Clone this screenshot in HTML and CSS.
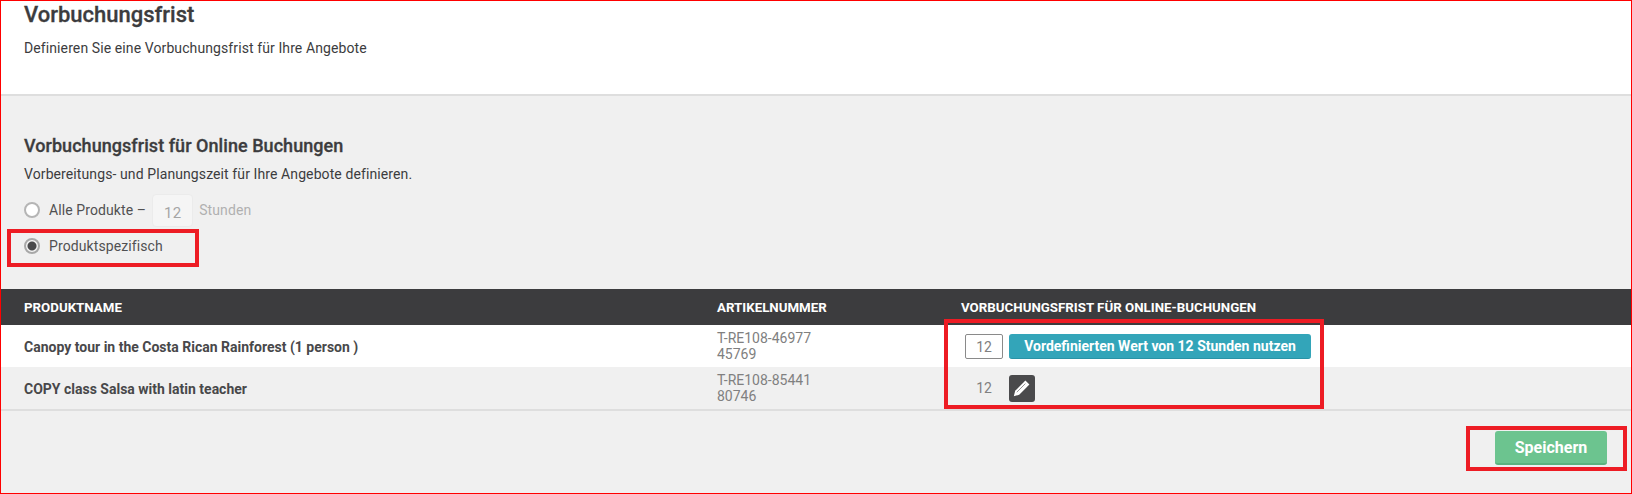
FILE: index.html
```html
<!DOCTYPE html>
<html lang="de">
<head>
    <meta charset="UTF-8">
    <title>Vorbuchungsfrist</title>
    <link rel="stylesheet" href="styles.css">
</head>
<body>
    <div class="page">
        <header class="page-head">
            <h1>Vorbuchungsfrist</h1>
            <p>Definieren Sie eine Vorbuchungsfrist für Ihre Angebote</p>
        </header>

        <section class="intro">
            <h2>Vorbuchungsfrist für Online Buchungen</h2>
            <p>Vorbereitungs- und Planungszeit für Ihre Angebote definieren.</p>
            <div class="option option-all">
                <span class="radio"></span>
                <span class="option-label">Alle Produkte –</span>
                <span class="hours-box">12</span>
                <span class="option-muted">Stunden</span>
            </div>
            <div class="option option-specific">
                <span class="radio radio-on"></span>
                <span class="option-label">Produktspezifisch</span>
            </div>
        </section>

        <div class="table">
            <div class="row row-head">
                <div>PRODUKTNAME</div>
                <div>ARTIKELNUMMER</div>
                <div>VORBUCHUNGSFRIST FÜR ONLINE-BUCHUNGEN</div>
            </div>
            <div class="row row-white">
                <div class="name">Canopy tour in the Costa Rican Rainforest (1 person )</div>
                <div class="number">T-RE108-46977<br>45769</div>
                <div class="lead">
                    <span class="lead-input">12</span>
                    <button class="btn-default">Vordefinierten Wert von 12 Stunden nutzen</button>
                </div>
            </div>
            <div class="row row-grey">
                <div class="name">COPY class Salsa with latin teacher</div>
                <div class="number">T-RE108-85441<br>80746</div>
                <div class="lead">
                    <span class="lead-value">12</span>
                    <button class="btn-edit" aria-label="Bearbeiten">
                        <svg width="18" height="18" viewBox="0 0 18 18">
                            <path d="M12.4 1.6l4 4-10.2 10.2-5.4 1.4 1.4-5.4z" fill="#fff"/>
                            <path d="M3.8 13.2l8.6-8.6" stroke="#77777a" stroke-width="0.8" fill="none"/>
                        </svg>
                    </button>
                </div>
            </div>
        </div>

        <div class="actions">
            <button class="btn-save">Speichern</button>
        </div>

        <!-- red marks from the screenshot -->
        <div class="mark mark-radio"></div>
        <div class="mark mark-table"></div>
        <div class="mark mark-save"></div>
    </div>
</body>
</html>
```

FILE: styles.css
```css
* {
    box-sizing: border-box;
    margin: 0;
    padding: 0;
}

body {
    font-family: Roboto, Arial, sans-serif;
    color: #3c3c3e;
    background: #f0f0f0;
}

.page {
    position: relative;
    width: 1632px;
    height: 494px;
    border: 1px solid #f00;
    overflow: hidden;
}

.page-head {
    height: 95px;
    padding: 0 0 0 23px;
    background: #fff;
    border-bottom: 2px solid #dedede;
}

.page-head h1 {
    font-size: 22px;
    font-weight: 500;
    line-height: 28px;
    -webkit-text-stroke: 0.3px #3c3c3e;
}

.page-head p {
    margin-top: 9px;
    font-size: 14px;
    line-height: 20px;
    letter-spacing: 0.1px;
}

.intro {
    height: 193px;
    padding: 38px 0 0 23px;
}

.intro h2 {
    font-size: 18px;
    font-weight: 500;
    line-height: 24px;
    letter-spacing: 0.05px;
    -webkit-text-stroke: 0.3px #3c3c3e;
}

.intro p {
    margin-top: 6px;
    font-size: 14px;
    line-height: 20px;
    letter-spacing: 0.1px;
}

.option {
    display: flex;
    align-items: center;
    font-size: 14px;
    letter-spacing: 0.1px;
}

.option-all {
    height: 34px;
    margin-top: 9px;
}

.option-specific {
    height: 20px;
    margin-top: 9px;
}

.radio {
    width: 16px;
    height: 16px;
    margin-right: 9px;
    background: #fff;
    border: 2px solid #b5b5b5;
    border-radius: 50%;
}

.radio-on {
    border-color: #a8a8a8;
    background: radial-gradient(circle, #4a4a4c 0 4px, #f4f4f4 5px);
}

.option-label {
    color: #505052;
}

.hours-box {
    width: 41px;
    height: 33px;
    margin: 0 6px 0 6px;
    padding-top: 9px;
    text-align: center;
    font-size: 15px;
    color: #a5a5a5;
    background: #f5f5f5;
    border: 1px solid #ebebeb;
    border-radius: 4px;
}

.option-muted {
    color: #b0b0b0;
}

.row {
    display: grid;
    grid-template-columns: 693px 244px 1fr;
    padding-left: 23px;
    align-items: center;
}

.row-head {
    height: 36px;
    background: #3c3c3e;
    color: #fff;
    font-size: 13.3px;
    font-weight: 700;
}

.row-white,
.row-grey {
    height: 42px;
}

.row-white {
    background: #fff;
}

.row-grey {
    background: #f0f0f0;
}

.table {
    border-bottom: 2px solid #dedede;
}

.name {
    padding-top: 1px;
    font-size: 14px;
    font-weight: 700;
    color: #48484a;
}

.number {
    font-size: 14px;
    line-height: 16px;
    color: #808080;
}

.lead {
    display: flex;
    align-items: center;
    font-size: 14px;
    color: #808080;
}

.lead-input {
    width: 38px;
    height: 25px;
    margin: 0 6px 0 4px;
    line-height: 24px;
    text-align: center;
    background: #fff;
    border: 1px solid #8a8a8a;
    border-radius: 2px;
}

.lead-value {
    width: 38px;
    margin: 0 6px 0 4px;
    text-align: center;
}

.btn-default {
    width: 302px;
    height: 25px;
    font-family: inherit;
    font-size: 14px;
    font-weight: 700;
    color: #fff;
    background: #33a5b9;
    border: none;
    border-bottom: 1px solid #2a93a6;
    border-radius: 3px;
}

.btn-edit {
    display: flex;
    align-items: center;
    justify-content: center;
    width: 26px;
    height: 27px;
    background: #4a4a4c;
    border: none;
    border-radius: 3px;
}

.actions {
    display: flex;
    justify-content: flex-end;
    padding: 20px 24px 0 0;
}

.btn-save {
    width: 112px;
    height: 34px;
    font-family: inherit;
    font-size: 16px;
    font-weight: 700;
    color: #fff;
    background: #6cc48f;
    border: none;
    border-bottom: 2px solid #5bb37f;
    border-radius: 3px;
}

.mark {
    position: absolute;
    border: 4px solid #ed1c24;
}

.mark-radio {
    left: 6px;
    top: 228px;
    width: 192px;
    height: 38px;
}

.mark-table {
    left: 943px;
    top: 318px;
    width: 380px;
    height: 90px;
}

.mark-save {
    left: 1465px;
    top: 425px;
    width: 161px;
    height: 45px;
}
```
